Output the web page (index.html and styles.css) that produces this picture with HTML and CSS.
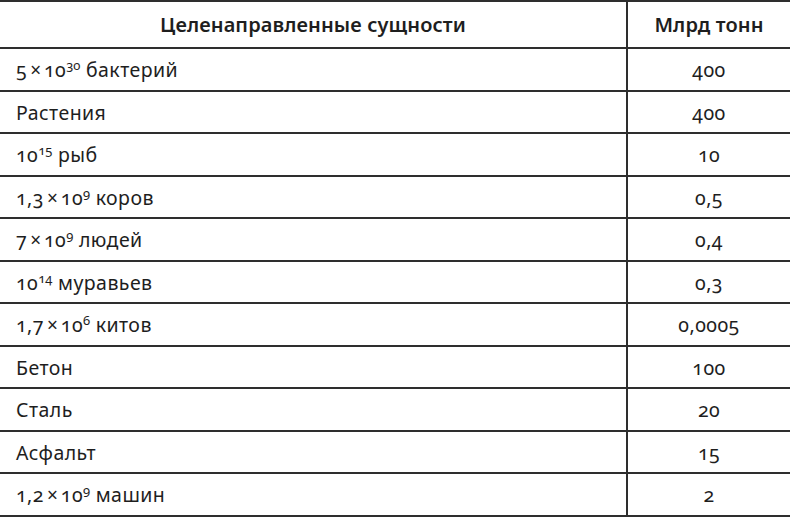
FILE: index.html
```html
<!DOCTYPE html>
<html lang="ru">
<head>
<meta charset="utf-8">
<link rel="stylesheet" href="styles.css">
</head>
<body>
<table class="data">
  <thead>
    <tr><th class="name">Целенаправленные сущности</th><th class="val">Млрд тонн</th></tr>
  </thead>
  <tbody>
    <tr><td class="name">5<span class="x">×</span>10<sup>30</sup> бактерий</td><td class="val">400</td></tr>
    <tr><td class="name">Растения</td><td class="val">400</td></tr>
    <tr><td class="name">10<sup>15</sup> рыб</td><td class="val">10</td></tr>
    <tr><td class="name">1,3<span class="x">×</span>10<sup>9</sup> коров</td><td class="val">0,5</td></tr>
    <tr><td class="name">7<span class="x">×</span>10<sup>9</sup> людей</td><td class="val">0,4</td></tr>
    <tr><td class="name">10<sup>14</sup> муравьев</td><td class="val">0,3</td></tr>
    <tr><td class="name">1,7<span class="x">×</span>10<sup>6</sup> китов</td><td class="val">0,0005</td></tr>
    <tr><td class="name">Бетон</td><td class="val">100</td></tr>
    <tr><td class="name">Сталь</td><td class="val">20</td></tr>
    <tr><td class="name">Асфальт</td><td class="val">15</td></tr>
    <tr><td class="name">1,2<span class="x">×</span>10<sup>9</sup> машин</td><td class="val">2</td></tr>
  </tbody>
</table>
</body>
</html>
```
FILE: styles.css
```css
html, body {
  margin: 0;
  padding: 0;
  background: #fff;
}
body {
  font-family: "Noto Sans", "Open Sans", sans-serif;
  color: #1e1e1e;
  font-variant-numeric: oldstyle-nums;
}
.data {
  width: 790px;
  border-collapse: collapse;
  border-top: 2px solid #2e2e2e;
  table-layout: fixed;
}
.data th, .data td {
  border-bottom: 2px solid #2e2e2e;
  padding: 0;
  vertical-align: middle;
}
.data th {
  height: 45px;
  font-size: 20px;
  font-weight: 600;
  letter-spacing: 0.1px;
  text-align: center;
}
.data td {
  height: 39.5px;
  padding-top: 1px;
  font-size: 19.5px;
  letter-spacing: 0.45px;
  font-weight: 400;
}
.data .name {
  width: 626px;
  border-right: 2px solid #2e2e2e;
}
.data td.name {
  text-align: left;
  padding-left: 16px;
}
.data .val {
  text-align: center;
}
.x {
  margin: 0 3px;
  font-size: 19px;
  letter-spacing: 0;
}
sup {
  font-size: 13px;
  line-height: 0;
  letter-spacing: 0;
  vertical-align: 7px;
}
```
